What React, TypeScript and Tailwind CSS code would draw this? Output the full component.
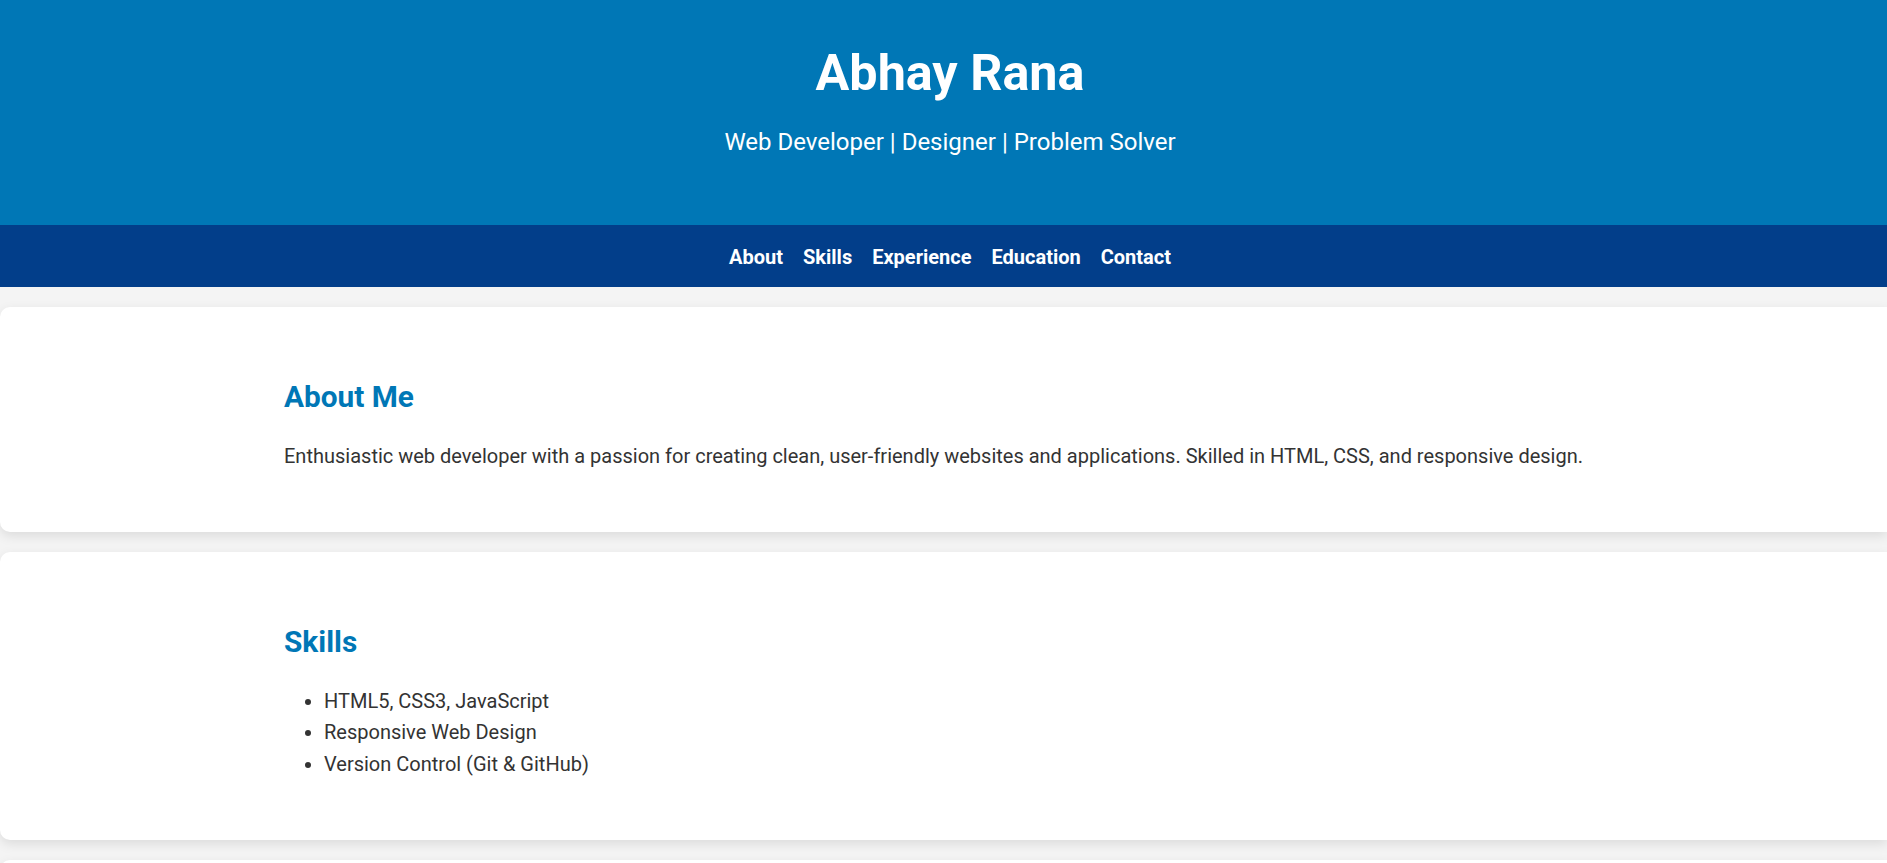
const navigation = ['About', 'Skills', 'Experience', 'Education', 'Contact'];

const skills = ['HTML5, CSS3, JavaScript', 'Responsive Web Design', 'Version Control (Git & GitHub)'];

function Section({ title, children }: { title: string; children: React.ReactNode }) {
  return (
    <section className="mt-[20px] bg-white rounded-l-[10px] shadow-[0_4px_12px_rgba(0,0,0,0.1)] pl-[284px] pr-[284px] pt-[65px] pb-[59px]">
      <h2 className="text-[29.8px] leading-[50px] font-bold text-[#0077b6]">{title}</h2>
      <div className="mt-[19px] text-[20px] leading-[31.7px] text-[#333]">{children}</div>
    </section>
  );
}

export default function App() {
  return (
    <div className="min-h-screen bg-[#f4f4f4] overflow-hidden" style={{ fontFamily: 'Roboto, "Liberation Sans", sans-serif' }}>
      <header className="h-[225px] bg-[#0077b6] text-white text-center pt-[43px] pl-[13px]">
        <h1 className="text-[50.3px] leading-[60px] font-bold">Abhay Rana</h1>
        <p className="mt-[25px] text-[24px] leading-[28px]">Web Developer | Designer | Problem Solver</p>
      </header>

      <nav className="h-[62px] bg-[#023e8a] flex items-center justify-center gap-[20px] pl-[13px] pt-[2px]">
        {navigation.map((item) => (
          <a key={item} href={`#${item.toLowerCase()}`} className="text-[20px] font-bold text-white">
            {item}
          </a>
        ))}
      </nav>

      <Section title="About Me">
        <p>
          Enthusiastic web developer with a passion for creating clean, user-friendly websites and applications. Skilled in HTML, CSS, and responsive design.
        </p>
      </Section>

      <Section title="Skills">
        <ul className="list-disc pl-[40px]">
          {skills.map((s) => (
            <li key={s}>{s}</li>
          ))}
        </ul>
      </Section>

      <Section title="Experience">
        <p>Freelance Web Developer – building responsive websites for small businesses.</p>
      </Section>
    </div>
  );
}
